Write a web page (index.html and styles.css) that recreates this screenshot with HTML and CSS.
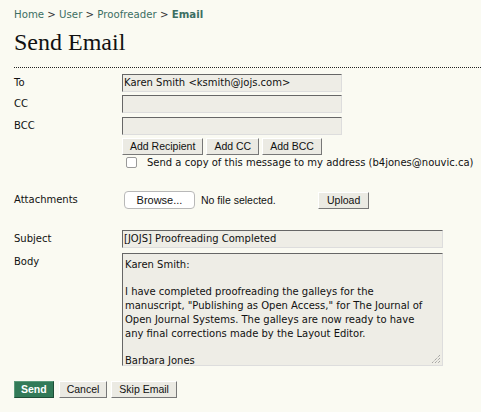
FILE: index.html
```html
<!DOCTYPE html>
<html>
<head>
<meta charset="utf-8">
<link rel="stylesheet" href="styles.css">
</head>
<body>
<div class="page">
  <div class="crumbs"><a>Home</a> &gt; <a>User</a> &gt; <a>Proofreader</a> &gt; <a class="current">Email</a></div>
  <h1 class="title">Send Email</h1>
  <div class="rule"></div>
  <div class="form">
    <div class="row r-to"><div class="label">To</div><div class="field"><div class="input">Karen Smith &lt;ksmith@jojs.com&gt;</div></div></div>
    <div class="row r-cc"><div class="label">CC</div><div class="field"><div class="input"></div></div></div>
    <div class="row r-bcc"><div class="label">BCC</div><div class="field"><div class="input"></div></div></div>
    <div class="row r-btns"><div class="label"></div><div class="field btns">
      <span class="btn">Add Recipient</span><span class="btn">Add CC</span><span class="btn">Add BCC</span>
    </div></div>
    <div class="row r-check"><div class="label"></div><div class="field check"><span class="box"></span><span>Send a copy of this message to my address (b4jones@nouvic.ca)</span></div></div>
    <div class="row r-attach"><div class="label">Attachments</div><div class="field attach">
      <span class="browse">Browse...</span><span class="nofile">No file selected.</span><span class="btn upload">Upload</span>
    </div></div>
    <div class="row r-subject"><div class="label">Subject</div><div class="field"><div class="input wide">[JOJS] Proofreading Completed</div></div></div>
    <div class="row r-body"><div class="label">Body</div><div class="field"><div class="textarea">Karen Smith:<br><br>I have completed proofreading the galleys for the manuscript, "Publishing as Open Access," for The Journal of Open Journal Systems. The galleys are now ready to have any final corrections made by the Layout Editor.<br><br>Barbara Jones<svg class="grip" width="10" height="10" viewBox="0 0 10 10"><path d="M9 1L1 9M9 4L4 9M9 7L7 9" stroke="#888" stroke-width="1" stroke-dasharray="1 1"/></svg></div></div></div>
  </div>
  <div class="actions"><span class="btn send">Send</span><span class="btn">Cancel</span><span class="btn">Skip Email</span></div>
</div>
</body>
</html>
```
FILE: styles.css
```css
html, body { margin: 0; padding: 0; background: #fafaf2; }
.page { padding: 8px 0 0 14px; font-family: "DejaVu Sans", Verdana, sans-serif; font-size: 10px; color: #111; }
.crumbs { font-size: 10.2px; color: #333; line-height: 13px; }
.crumbs a { color: #3c6e63; }
.crumbs a.current { font-weight: bold; }
.title { font-family: "Liberation Serif", "Times New Roman", serif; font-weight: normal; font-size: 24px; margin: 8px 0 0; line-height: 26px; color: #111; }
.rule { border-top: 1px dotted #222; margin-top: 12px; }
.form { margin-top: 6px; }
.row { display: flex; }
.label { width: 108px; flex: none; padding-top: 3px; line-height: 12px; }
.field { flex: none; }
.input { box-sizing: border-box; width: 220px; height: 18px; background: #eeede6; border: 1px solid; border-color: #666 #ddd #ddd #666; padding: 1px 1px 0; line-height: 13px; white-space: nowrap; }
.input.wide { width: 321px; }
.r-cc { margin-top: 3px; }
.r-bcc { margin-top: 4px; }
.r-btns { margin-top: 3px; }
.btns { display: flex; gap: 3px; }
.btn { display: inline-block; box-sizing: border-box; font-family: "Liberation Sans", Arial, sans-serif; font-size: 10.5px; line-height: 15px; height: 17px; padding: 0 7px; background: #ebeae3; border: 1px solid; border-color: #fff #777 #777 #fff; color: #111; }
.check { display: flex; align-items: center; gap: 10px; padding-left: 4px; margin-top: 2px; }
.box { width: 9px; height: 9px; border: 1px solid #999; border-radius: 2px; background: #fff; }
.r-attach { margin-top: 23px; }
.attach { display: flex; align-items: center; padding-left: 2px; }
.browse { box-sizing: border-box; width: 71px; height: 18px; border: 1px solid #b8b8b8; border-radius: 4px; background: #fff; font-family: "Liberation Sans", Arial, sans-serif; font-size: 11px; text-align: center; line-height: 16px; }
.nofile { font-family: "Liberation Sans", Arial, sans-serif; font-size: 10.5px; margin-left: 6px; width: 117px; }
.upload { padding: 0 8px; }
.r-subject { margin-top: 21px; }
.r-body { margin-top: 5px; }
.textarea { position: relative; box-sizing: border-box; width: 321px; height: 113px; background: #eeede6; border: 1px solid; border-color: #666 #ddd #ddd #666; padding: 4px 12px 3px 2px; line-height: 13.7px; }
.grip { position: absolute; right: 1px; bottom: 1px; }
.actions { display: flex; gap: 4px; margin-top: 15px; }
.send { background: #327a58; color: #fff; font-weight: bold; border-color: #5a9a7a #1d4d36 #1d4d36 #5a9a7a; padding: 0 6px; margin-right: 1px; }
```
